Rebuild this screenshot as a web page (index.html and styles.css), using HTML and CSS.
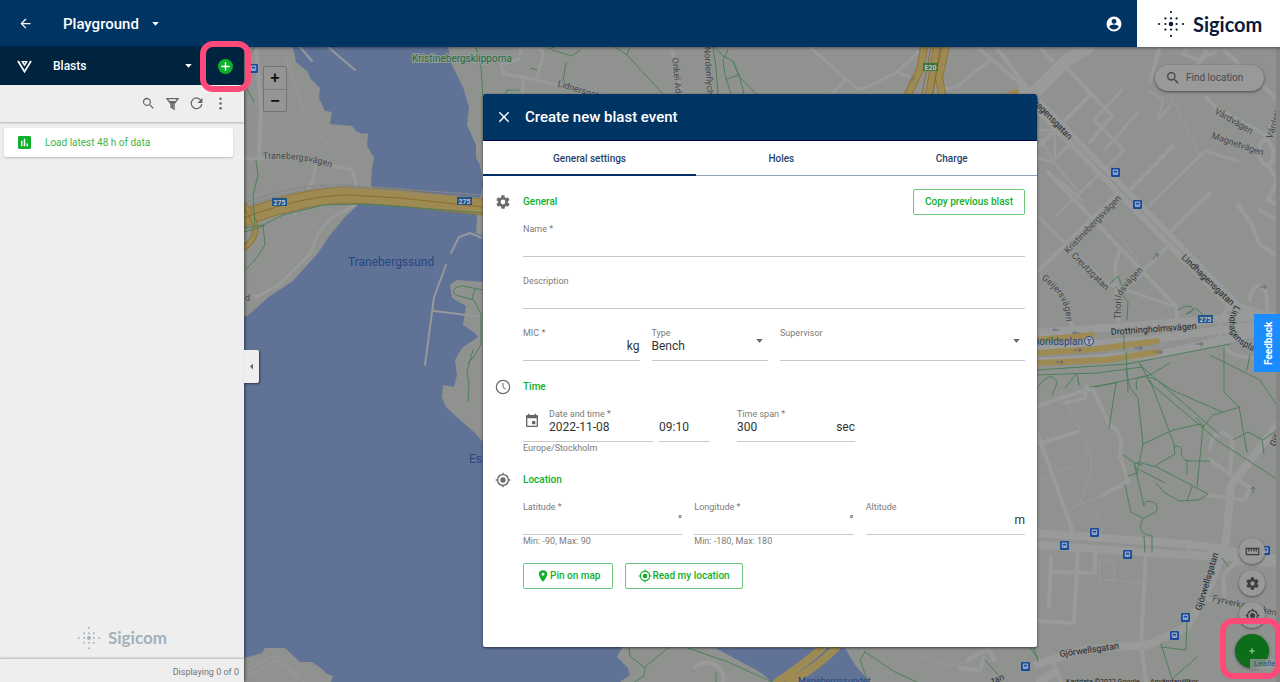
FILE: index.html
```html
<!DOCTYPE html>
<html lang="en">
<head>
<meta charset="utf-8">
<title>Playground – Blasts</title>
<link rel="stylesheet" href="styles.css">
</head>
<body>
<svg class="sprite" aria-hidden="true">
  <symbol id="i-gear" viewBox="0 0 24 24"><path d="M19.4 13c0-.3.1-.6.1-1s0-.7-.1-1l2.100-1.600c.2-.2.200-.4.100-.6l-2-3.500c-.1-.2-.4-.3-.6-.2l-2.500 1c-.5-.4-1.100-.7-1.700-1l-.4-2.600A.5.500 0 0 0 14 2h-4c-.2 0-.5.200-.5.400l-.4 2.700c-.6.200-1.100.600-1.700 1l-2.500-1c-.2-.1-.5 0-.6.200l-2 3.500c-.1.200-.1.500.1.600L4.500 11a8 8 0 0 0 0 2l-2.100 1.600c-.2.200-.2.400-.1.600l2 3.500c.1.200.4.300.6.200l2.500-1c.5.400 1.100.700 1.700 1l.4 2.600c0 .3.300.500.500.500h4c.2 0 .5-.2.500-.4l.4-2.700c.6-.2 1.100-.6 1.700-1l2.500 1c.2.100.5 0 .6-.2l2-3.500c.1-.2.1-.5-.1-.6zM12 15.600a3.600 3.600 0 1 1 0-7.200 3.600 3.600 0 0 1 0 7.200z"/></symbol>
  <symbol id="i-search" viewBox="0 0 24 24"><path d="M15.500 14h-.8l-.3-.3A6.500 6.500 0 1 0 13.700 14.400l.3.300v.8l5 5 1.500-1.500zm-6 0a4.500 4.500 0 1 1 0-9 4.500 4.500 0 0 1 0 9z"/></symbol>
  <symbol id="i-target" viewBox="0 0 24 24"><path d="M12 8a4 4 0 1 0 0 8 4 4 0 0 0 0-8zm8.900 3A9 9 0 0 0 13 3.100V1h-2v2.100A9 9 0 0 0 3.100 11H1v2h2.100A9 9 0 0 0 11 20.900V23h2v-2.100a9 9 0 0 0 7.900-7.900H23v-2zM12 19a7 7 0 1 1 0-14 7 7 0 0 1 0 14z"/></symbol>
  <symbol id="i-down" viewBox="0 0 10 6"><path d="M0 0h10L5 5.500z"/></symbol>
  <symbol id="i-dots" viewBox="0 0 30 30">
    <circle cx="15" cy="15" r="2.400"/><circle cx="15" cy="9" r="1.200"/><circle cx="15" cy="21" r="1.200"/><circle cx="9" cy="15" r="1.200"/><circle cx="21" cy="15" r="1.200"/>
    <circle cx="9" cy="9" r="1.200"/><circle cx="21" cy="9" r="1.200"/><circle cx="9" cy="21" r="1.200"/><circle cx="21" cy="21" r="1.200"/>
    <circle cx="15" cy="2.200" r="1.200"/><circle cx="15" cy="27.800" r="1.200"/><circle cx="2.200" cy="15" r="1.200"/><circle cx="27.800" cy="15" r="1.200"/>
  </symbol>
  <symbol id="m-bus" viewBox="0 0 10 10"><rect width="10" height="10" rx="1.500" fill="#174a9c"/><rect x="2" y="1.800" width="6" height="6" rx="1" fill="#a9b4cc"/><rect x="3" y="3" width="4" height="2" fill="#174a9c"/><path d="M3 6.500h1M6 6.500h1" stroke="#174a9c"/></symbol>
</svg>

<header class="topbar">
  <button class="icon-btn back" aria-label="Back"><svg viewBox="0 0 24 24"><path d="M20 11H7.800l5.600-5.600L12 4l-8 8 8 8 1.400-1.400L7.800 13H20z"/></svg></button>
  <button class="project">Playground <svg class="caret"><use href="#i-down"/></svg></button>
  <button class="icon-btn account" aria-label="Account"><svg viewBox="0 0 24 24"><path d="M12 2a10 10 0 1 0 0 20 10 10 0 0 0 0-20zm0 3.200a3.300 3.300 0 1 1 0 6.600 3.300 3.300 0 0 1 0-6.600zm0 14c-2.800 0-5.200-1.400-6.500-3.500.8-2 4.400-2.900 6.500-2.900s5.700.9 6.500 2.900A7.500 7.500 0 0 1 12 19.200z"/></svg></button>
  <div class="brand"><svg><use href="#i-dots"/></svg><span>Sigicom</span></div>
</header>

<main class="workspace">
  <aside class="sidebar">
    <div class="module">
      <svg class="module-icon" viewBox="0 0 16 14" aria-hidden="true"><path d="M1 1l7 11.500L15 1" fill="none" stroke="#fff" stroke-width="1.900"/><path d="M4.300 1h7.400L8 7z" fill="#fff"/><path d="M7 2.300h2L8 4z" fill="#00243f"/></svg>
      <div class="module-select">
        <select aria-label="Module"><option>Blasts</option></select>
        <svg class="caret"><use href="#i-down"/></svg>
      </div>
      <button class="add" aria-label="Add blast"><svg viewBox="0 0 16 16"><circle cx="8" cy="8" r="8" fill="#0cb02b"/><path d="M8 3.500v9M3.500 8h9" stroke="#fff" stroke-width="1.500"/></svg><span class="highlight highlight-add"></span></button>
    </div>
    <div class="toolbar">
      <button class="icon-btn" aria-label="Search"><svg viewBox="0 0 24 24"><use href="#i-search"/></svg></button>
      <button class="icon-btn" aria-label="Filter"><svg viewBox="0 0 24 24"><path d="M3 4h18l-6.500 8.500V21l-5-3v-5.500z" fill="none" stroke="currentColor" stroke-width="2"/><path d="M6.500 8h11l-4 4.500V20l-3-2v-5.500z"/></svg></button>
      <button class="icon-btn" aria-label="Refresh"><svg viewBox="0 0 24 24"><path d="M19.500 7.500A8.500 8.500 0 1 0 20.500 13" fill="none" stroke="currentColor" stroke-width="2"/><path d="M21.500 3v8h-8z"/></svg></button>
      <button class="icon-btn" aria-label="More"><svg viewBox="0 0 24 24"><circle cx="12" cy="4.500" r="2"/><circle cx="12" cy="12" r="2"/><circle cx="12" cy="19.500" r="2"/></svg></button>
    </div>
    <button class="load-card"><svg viewBox="0 0 14 14"><rect width="14" height="14" rx="1.500" fill="#0cb02b"/><path d="M4 5v6M7 3v8M10 8v3" stroke="#fff" stroke-width="1.600"/></svg>Load latest 48 h of data</button>
    <div class="watermark"><svg><use href="#i-dots"/></svg><span>Sigicom</span></div>
    <footer class="count">Displaying 0 of 0</footer>
    <button class="collapse" aria-label="Collapse panel"><svg viewBox="0 0 4 8"><path d="M4 0v8L0 4z"/></svg></button>
  </aside>

  <section class="map" aria-label="Map">
    <svg class="map-canvas" viewBox="244 47 1036 635" preserveAspectRatio="xMidYMid slice">
      <rect x="244" y="47" width="1036" height="635" fill="#909290"/>
      <g class="water">
        <path d="M293 47l3 15 12 10 2 6 10 10-1 10 6 13 7 1-1 6-1 6 10 1 12 1 4 5 6 3 6-1-1 13 7 12-2 10-1 17-3 5-10 15-13 12-15 18-12 18-25 28-23 15-17 15-6 5h-3v342l18-5 3-5h20l15 14h12l10 7 5 5 6 2-2 6h289l10-7-2-7-11-11 5-9-20-100-119-106-8-9-15-13-14-13-4-10 1-12 11 2 3-12-2-15 7-12 16-11-3-4-12-8 3-19-14-8-2-13 7-5 26 2 7-44-14-5 2-28 5-20-3-20-4-7v-13l-9-20 2-18-6-20-11-22-4-18z"/>
        <path d="M715 648l45 24 12 10h98l-15-17-10-17z"/>
      </g>
      <g class="pier"><path d="M300 47l12 14M328 47l27 23M451 253l8-16 11-4 12 5M446 265l-12 32-9 68M434 311l49 6"/></g>
      <g class="minor">
        <path d="M244 159l50-2 58 13 6 20M316 165l-3 15-10 20-8 14M371 187h-10l-6 18-25 14-12 15-8 20-30 30-23 13-3-2M522 47l-3 12-18 6 3 9 20 3 76 18M520 49l18-1q6 2 5 8l-6 22M524 77l-2 17M671 47l11 47M810 47l36 32-14 15M846 79l11 10 8-1 32-16 21-20M897 72l12 5M943 86l5 3 10-3 33-27M1037 158l15 4 20-20M1056 216l68-66-30-30 28-30M1037 215l69 68 70 24M1058 180l24 20M1105 150l33-38M1150 205l55-54 33 10"/>
        <path d="M1040 130h15v30M1042 140l10 20 25 30M1148 90l15 10-5 20 13-15" stroke-width="2"/>
      </g>
      <g class="street">
        <path d="M256 47l5 60-2 52M977 47l50 42M996 47l31 40M1040 47l12 14M1066 67l46 49-22 26M1037 272l82-79M1130 190l43-44M1030 155l30-30 30-30M1048 172l55 58 73 76 1 15M1042 277l24 24 6 24M1120 250l-5 15 4 55M1128 286l45-45M1172 230l38-37M1187 47l-3 7 14 6 17-8M1190 78l16-27M1160 47l-10 35M1225 51l54 50M1206 97l9 10 50 28 13-20M1265 140c-8 0-8 25 2 25s7-25-2-25M1267 165l11 15-10 20 12 6M1238 205l14 20 8 20 20 12M1260 210l20 12M1250 300c0-20 20-20 17 10M1235 303c-20 10-20 45 0 52l45 8"/>
        <path d="M1037 406l55-18 18 38c12 4 12 20 10 30l8 25-27 15M1037 432l36 100M1065 403l20-5 1-12M1037 444l40-12M1210 450c2-20 15-20 23-10l-3 32M1210 460l40 28-5 12-38-5M1051 557l-2 50M1053 572l42 1v-20M1078 550l-4 73-37-2M1146 553l-5 92M1225 600l-2-25 12-12 41 2M1209 599l40 8M1142 650l4 32M1053 662l8 20M1186 541c8 3 2 12 0 12"/>
        <path d="M695 667c12-10 32 0 28 15M968 660l14-8 6-4 6 12M960 668l20 2 4-12"/>
      </g>
      <g class="thin"><path d="M281 47l22 65 48 65M1065 400l25 50-10 12-42 20M1085 450c10 0 8 30-5 50l20 15-15 10M1105 495l-40 15M1105 580l40 3M1100 560h14v20h-14zM918 655l32 10 15-2M925 660l15-12M244 672l30-16 25 20M244 678l32-18 28 22M1090 200l48 60M1037 240l40 45M1165 65l5 30 30 60 12 8"/></g>
      <g class="avenue">
        <path d="M1088 47l-24 16-40 40M1023 90l214 219 43 14" stroke-width="13"/>
        <path d="M1037 333l240-18M1037 360l120-5 120-27M1037 348l110-8 133-18M1037 533l160 12 82 14M1037 545l150 10 93 5" stroke-width="8"/>
        <path d="M1037 664l50-15 60-4 40-18 25-45 14-40 5-57 49-63M1040 682l15-10" stroke-width="8"/>
      </g>
      <path class="avenue-line" d="M1033 100l200 205"/>
      <g class="highway">
        <path class="edge" d="M244 218q60-23 106-23l50 3 83 9" stroke-width="17"/><path d="M244 218q60-23 106-23l50 3 83 9" stroke-width="15"/>
        <path class="edge" d="M244 205q8 8 11 20t-11 23" stroke-width="6"/><path d="M244 205q8 8 11 20t-11 23" stroke-width="4"/>
        <path class="edge" d="M924 47l-3 20-14 30M937 47l-4 25-4 22M946 47l-7 30 3 17" stroke-width="8"/><path d="M924 47l-3 20-14 30M937 47l-4 25-4 22M946 47l-7 30 3 17" stroke-width="6"/>
        <path d="M1004 97l12-5"/>
        <path d="M1037 340l55-5M1037 353l60-4 60-8M1037 363l70-3 50-8" stroke-width="6"/>
        <path d="M822 648q-20 18-45 34M836 648q-20 20-46 34" stroke-width="8"/>
      </g>
      <path class="highway-line" d="M244 218q60-23 106-23l50 3 83 9M931 47l-9 47M940 47l-7 47"/>
      <path class="rail" d="M244 203q50-20 100-18l139 10M244 207q60-22 106-20l133 11M1037 357l70-4"/>
      <g class="path">
        <path d="M255 47l-5 7M246 87l8 15M256 160l2 15-5 20 2 30M244 228l19-3 20-10 40-10 45-1 115 9M263 225l2 20-10 15-10 10M244 232l20-6M476 47l5 20 2 30M483 290l-20-4c-10 0-13 8-4 10l15 4 7 14v30l-8 14-5 5M475 289l-3 10M473 350l-6 22 2 12-1 17M615 47l12 8 36 39M627 54l3-7M549 49l5-2M552 50l20 6 8-6M566 63l-3 18M531 68l6 2M505 94l2-4h12M713 47l3 20 2 27M715 47l8 9 10 5 6 15 17 18M728 50l-5 10 2 15 6 19M733 61l6 14 5 19M726 79l13-4"/>
        <path d="M629 648l1 8 15 12-1 8-10 6M645 667l24-20M688 648l40 14 44 20M716 673v9M865 652l-5 8 8 22M865 652l30 20 22 10M985 660l15 17M1034 648l4 14"/>
        <path d="M1037 370l90-6 103-20M1124 330v20M1126 352l2 40M1110 284l8-8 4 10M1116 287l12 15-1 18M1178 310c15-10 20 2 8 4l10-6 10 10M1140 363l10 20 68 58 62 40M1140 365l80 70M1224 347v45l15 15 8 45M1210 355l50 25 20 30M1250 355l-3 15M1037 375l60-2 45-6M1065 388l12-15 2 12M1095 387l55-12 20-12M1037 388q15-20 20-5l-5 12M1137 390q-5-20 20-10l15 10 50 22"/>
        <path d="M1090 387l26-4-7 45M1126 370l4 18 8 10 5 46-6 30M1150 380l24 64 1 10-20 12M1143 444l30-14 27-6 3 3-6 60M1137 462l20 5 51 27-9 6-20 1-14-8-9-10M1123 455l12 8 7 2M1174 446c15 0 0 10 14 15h22M1187 460v14M1135 465l3 8-10 3M1140 470l25 13M1125 485l6 27 12 6M1134 463l10 43c-2-8 18-6 12 6l-12 6c-8 12-2 16 8 18v16M1144 536l1 16M1192 487l-5 14M1203 427l10-12 27-8M1196 418l8 8M1233 440l15-8 15 8 17-12M1262 440l2 14M1161 644l11 35 25-22M1161 647l25 3 1-30M1222 558l6 8M1030 648l8 10"/>
      </g>
      <g class="text street-label">
        <path id="t1" d="M263 159q38-2 70 9" fill="none"/><text><textPath href="#t1">Tranebergsvägen</textPath></text>
        <text x="245" y="301">d</text>
        <text transform="translate(557 86) rotate(17)">Lidnersgatan</text>
        <text transform="translate(672 58) rotate(84)">Onkel Adams</text>
        <text transform="translate(704 47) rotate(86)">Nordenflychtsvägen</text>
        <text class="strong" transform="translate(1029 99) rotate(46)">dhagensgatan</text>
        <text class="strong" transform="translate(1181 258) rotate(44)">Lindhagensgatan</text>
        <path id="t2" d="M1235 305q-18 32 20 47l20 4" fill="none"/><text class="strong"><textPath href="#t2">Lindhagensplan</textPath></text>
        <text transform="translate(1214 113) rotate(30)">Vårdvägen</text>
        <text transform="translate(1211 138) rotate(19)">Magnetvägen</text>
        <text transform="translate(1272 139) rotate(-72)">Vårdstig</text>
        <text transform="translate(1068 254) rotate(-46)">Kristinebergsvägen</text>
        <text transform="translate(1071 256) rotate(45)">Creutzgatan</text>
        <path id="t3" d="M1041 279q24 16 25 38v20" fill="none"/><text><textPath href="#t3">Geijersvägen</textPath></text>
        <path id="t4" d="M1121 319v-20q2-10 24-30" fill="none"/><text><textPath href="#t4">Thorildsvägen</textPath></text>
        <text class="strong" transform="translate(1111 335) rotate(-4)">Drottningholmsvägen</text>
        <text class="strong" transform="translate(1060 657) rotate(-8)">Gjörwellsgatan</text>
        <text class="strong" transform="translate(1201 611) rotate(-73)">Gjörwellsgatan</text>
        <text class="strong" transform="translate(1275 447) rotate(-65)">Gjörwells</text>
        <text transform="translate(1212 601) rotate(13)">Fyrverkarbacken</text>
        <text class="strong" transform="translate(993 684) rotate(-22)">tan</text>
      </g>
      <g class="text water-label"><text x="348" y="266">Tranebergssund</text><text x="469" y="463">Essingen</text><text class="small" x="798" y="684">Mariebergssundet</text><text class="station" x="1083" y="345" text-anchor="end">Thorildsplan</text></g>
      <text class="text park-label" x="412" y="62">Kristinebergsklipporna</text>
      <circle cx="1089" cy="341" r="4.500" fill="#a5aab3" stroke="#294b87"/><text class="text badge" x="1089" y="344" fill="#294b87" text-anchor="middle">T</text>
      <g fill="#21548d"><rect x="272" y="198" width="15" height="8"/><rect x="457" y="197" width="15" height="8"/><rect x="1198" y="315" width="15" height="8"/></g>
      <rect x="923" y="63" width="15" height="8" fill="#39753a"/>
      <g class="text badge" fill="#c0c5ca" text-anchor="middle"><text x="279.500" y="205">275</text><text x="464.500" y="204">275</text><text x="1205.500" y="322">275</text><text x="930.500" y="70">E20</text></g>
      <g>
        <use href="#m-bus" x="249" y="64" width="9" height="9"/><use href="#m-bus" x="1111" y="168" width="9" height="9"/><use href="#m-bus" x="1133" y="200" width="9" height="9"/>
        <use href="#m-bus" x="1090" y="528" width="9" height="9"/><use href="#m-bus" x="1060" y="541" width="9" height="9"/><use href="#m-bus" x="1123" y="550" width="9" height="9"/>
        <use href="#m-bus" x="1181" y="613" width="9" height="9"/><use href="#m-bus" x="1170" y="631" width="9" height="9"/><use href="#m-bus" x="1021" y="662" width="9" height="9"/><use href="#m-bus" x="1261" y="546" width="9" height="9"/>
      </g>
      <path class="arrow" d="M1053 330h6m-6 0l2-1.500M1073 333h6m-6 0l2-1.500M1074 350h7m-2-2l2 2-2 2M1135 348h7m-2-2l2 2-2 2M1155 352h7m-2-2l2 2-2 2M1196 344h7m-2-2l2 2-2 2M1056 362h7m-2-2l2 2-2 2M1153 259l5-5m-3 0h3v3M1260 287h6m-2-2l2 2-2 2M1253 493v-6m-2 2l2-2 2 2M915 76l-3 5"/>
      <g class="text credits"><text x="1066" y="684">Kartdata ©2022 Google</text><text x="1150" y="684">Användarvillkor</text></g>
      <rect x="1276" y="47" width="4" height="635" fill="#858685"/>
    </svg>

    <div class="zoom-control"><button aria-label="Zoom in">+</button><button aria-label="Zoom out">−</button></div>
    <label class="find"><svg viewBox="0 0 24 24"><use href="#i-search"/></svg><input type="search" placeholder="Find location" aria-label="Find location"></label>
    <div class="map-tools">
      <button aria-label="Measure"><svg viewBox="0 0 24 24"><path d="M2 7h20v10H2zM6 7v5M10 7v5M14 7v5M18 7v5" fill="none" stroke="currentColor" stroke-width="2"/></svg></button>
      <button aria-label="Map settings"><svg><use href="#i-gear"/></svg></button>
      <button aria-label="My position"><svg><use href="#i-target"/></svg></button>
      <button class="fab" aria-label="Add"><svg viewBox="0 0 24 24"><path d="M12 4v16M4 12h16" stroke="#b7d3ba" stroke-width="3"/></svg></button>
      <a class="leaflet" href="#">Leaflet</a>
      <span class="highlight highlight-fab"></span>
    </div>
    <button class="feedback">Feedback</button>

    <div class="dialog-layer">
      <form class="dialog" role="dialog" aria-labelledby="dialog-title">
        <header class="dialog-head">
          <button type="button" class="icon-btn" aria-label="Close"><svg viewBox="0 0 24 24"><path d="M4 4l16 16M20 4L4 20" stroke="currentColor" stroke-width="2.400"/></svg></button>
          <h1 id="dialog-title">Create new blast event</h1>
        </header>
        <nav class="tabs" role="tablist">
          <button type="button" role="tab" aria-selected="true" class="tab active">General settings</button>
          <button type="button" role="tab" class="tab">Holes</button>
          <button type="button" role="tab" class="tab">Charge</button>
        </nav>
        <div class="dialog-body">
          <section class="group">
            <svg class="group-icon"><use href="#i-gear"/></svg>
            <div class="group-head"><h2>General</h2><button type="button" class="outline">Copy previous blast</button></div>
            <div class="fields general-fields">
              <div class="field full"><label for="name">Name *</label><div class="control"><input id="name"></div></div>
              <div class="field full"><label for="desc">Description</label><div class="control"><input id="desc"></div></div>
              <div class="field"><label for="mic">MIC *</label><div class="control"><input id="mic"><span>kg</span></div></div>
              <div class="field"><label for="type">Type</label><div class="control"><select id="type"><option>Bench</option></select><svg class="caret"><use href="#i-down"/></svg></div></div>
              <div class="field half"><label for="sup">Supervisor</label><div class="control"><select id="sup"><option></option></select><svg class="caret"><use href="#i-down"/></svg></div></div>
            </div>
          </section>
          <section class="group">
            <svg class="group-icon" viewBox="0 0 24 24"><circle cx="12" cy="12" r="10" fill="none" stroke="currentColor" stroke-width="1.800"/><path d="M12 6v6.500l4.500 3" fill="none" stroke="currentColor" stroke-width="1.500"/></svg>
            <div class="group-head"><h2>Time</h2></div>
            <div class="fields time-fields">
              <div class="field date">
                <svg viewBox="0 0 24 24"><path d="M17 12h-5v5h5zM16 1v2H8V1H6v2H5a2 2 0 0 0-2 2v14c0 1.100.9 2 2 2h14a2 2 0 0 0 2-2V5a2 2 0 0 0-2-2h-1V1zm3 18H5V8h14z"/></svg>
                <label for="date">Date and time *</label><div class="control"><input id="date" value="2022-11-08"></div>
              </div>
              <div class="field"><div class="control"><input aria-label="Time of day" value="09:10"></div></div>
              <div class="field span"><label for="span">Time span *</label><div class="control"><input id="span" value="300"><span>sec</span></div></div>
            </div>
            <p class="hint">Europe/Stockholm</p>
          </section>
          <section class="group">
            <svg class="group-icon"><use href="#i-target"/></svg>
            <div class="group-head"><h2>Location</h2></div>
            <div class="fields location-fields">
              <div class="field"><label for="lat">Latitude *</label><div class="control"><input id="lat"><span class="degree">°</span></div><p class="hint">Min: -90, Max: 90</p></div>
              <div class="field"><label for="lng">Longitude *</label><div class="control"><input id="lng"><span class="degree">°</span></div><p class="hint">Min: -180, Max: 180</p></div>
              <div class="field"><label for="alt">Altitude</label><div class="control"><input id="alt"><span>m</span></div></div>
            </div>
            <div class="actions">
              <button type="button" class="outline"><svg viewBox="0 0 24 24"><path d="M12 2a7 7 0 0 0-7 7c0 5.300 7 13 7 13s7-7.700 7-13a7 7 0 0 0-7-7zm0 9.500a2.500 2.500 0 1 1 0-5 2.500 2.500 0 0 1 0 5z"/></svg>Pin on map</button>
              <button type="button" class="outline"><svg><use href="#i-target"/></svg>Read my location</button>
            </div>
          </section>
        </div>
      </form>
    </div>
  </section>
</main>
</body>
</html>
```
FILE: styles.css
```css
* { box-sizing: border-box; }
body {
  margin: 0;
  height: 100vh;
  display: flex;
  flex-direction: column;
  overflow: hidden;
  font: 10px/12px Roboto, "Liberation Sans", sans-serif;
  color: #333;
}
button, input, select {
  font: inherit;
  color: inherit;
  background: none;
  border: 0;
  padding: 0;
  margin: 0;
  border-radius: 0;
  outline: 0;
}
button { cursor: pointer; }
select { appearance: none; }
h1, h2, p { margin: 0; }
svg { fill: currentColor; flex: none; }
.sprite { position: absolute; width: 0; height: 0; }
.caret { width: 7px; height: 4px; }
.icon-btn { display: flex; }
.icon-btn svg { width: 15px; height: 15px; }

/* Top bar */
.topbar {
  flex: none;
  height: 47px;
  display: flex;
  align-items: center;
  padding-left: 18px;
  background: #003463;
  color: #fff;
  position: relative;
  z-index: 2;
  box-shadow: 0 1px 3px rgba(0, 0, 0, .45);
}
.project {
  display: flex;
  align-items: center;
  gap: 13px;
  margin-left: 30px;
  font-size: 15px;
  line-height: 20px;
  font-weight: 500;
}
.account { margin-left: auto; }
.account svg { width: 18px; height: 18px; }
.brand {
  align-self: stretch;
  display: flex;
  align-items: center;
  gap: 8px;
  width: 143px;
  margin-left: 14px;
  padding-left: 20px;
  background: #fff;
  color: #0a1a3a;
  font: 700 20px/24px Lato, sans-serif;
}
.brand svg { width: 28px; height: 28px; }

/* Sidebar */
.workspace { flex: 1; display: flex; min-height: 0; }
.sidebar {
  position: relative;
  flex: none;
  width: 244px;
  display: flex;
  flex-direction: column;
  background: #eee;
  box-shadow: 1px 0 3px rgba(0, 0, 0, .5);
  z-index: 3;
}
.module {
  height: 38px;
  display: flex;
  align-items: center;
  padding: 0 11px 0 17px;
  background: #00243f;
  color: #fff;
}
.module-icon { width: 15px; height: 13px; }
.module-select {
  flex: 1;
  display: flex;
  align-items: center;
  margin: 0 26px 0 21px;
}
.module-select select { flex: 1; font-size: 12px; line-height: 16px; font-weight: 500; }
.add { position: relative; display: flex; }
.add svg { width: 15px; height: 15px; }
.highlight {
  position: absolute;
  border: 6px solid #fe4a78;
  border-radius: 13px;
  pointer-events: none;
}
.highlight-add { inset: -18px; }
.toolbar {
  height: 37px;
  display: flex;
  align-items: center;
  justify-content: flex-end;
  gap: 9px;
  padding-right: 16px;
  color: #666;
  box-shadow: 0 1px 2px rgba(0, 0, 0, .25);
}
.toolbar svg { width: 15px; height: 15px; }
.load-card {
  display: flex;
  align-items: center;
  gap: 14px;
  height: 29px;
  margin: 6px 11px 0 4px;
  padding-left: 14px;
  border-radius: 2px;
  background: #fff;
  box-shadow: 0 1px 2px rgba(0, 0, 0, .2);
  color: #3db54a;
}
.load-card svg { width: 13px; height: 13px; }
.watermark {
  display: flex;
  align-items: center;
  justify-content: center;
  gap: 7px;
  margin-top: auto;
  padding-bottom: 9px;
  color: #a3b1b9;
  font: 700 17px/24px Lato, sans-serif;
}
.watermark svg { width: 24px; height: 24px; }
.count {
  padding: 7px 5px 4px;
  text-align: right;
  font-size: 9px;
  color: #757575;
  box-shadow: 0 -1px 2px rgba(0, 0, 0, .25);
}
.collapse {
  position: absolute;
  left: 100%;
  top: 303px;
  width: 15px;
  height: 33px;
  display: grid;
  place-items: center;
  background: #eee;
  color: #666;
  border-radius: 0 2px 2px 0;
  box-shadow: 1px 1px 2px rgba(0, 0, 0, .5);
}
.collapse svg { width: 3px; height: 7px; }

/* Map */
.map { position: relative; flex: 1; min-width: 0; background: #909290; }
.map-canvas { position: absolute; width: 100%; height: 100%; }
.map-canvas path { stroke-linejoin: round; stroke-linecap: round; }
.water { fill: #607397; }
.pier, .minor, .street, .avenue, .thin, .highway, .path { fill: none; }
.pier { stroke: #96989a; stroke-width: 2; }
.minor { stroke: #999a9a; stroke-width: 3; }
.street { stroke: #999a9a; stroke-width: 4; }
.avenue { stroke: #999a9a; }
.thin { stroke: #999a9a; stroke-width: 1; }
.avenue-line, .rail { fill: none; stroke: #868887; stroke-width: 1; }
.highway { stroke: #9e8a53; stroke-width: 6; }
.highway .edge { stroke: #927438; }
.highway-line { fill: none; stroke: #8d6d2c; stroke-width: 1; }
.path { stroke: #4c8059; stroke-width: 1; }
.arrow { fill: none; stroke: #626878; stroke-width: 1; }
.text { font-family: Roboto, sans-serif; font-size: 9px; }
.street-label { fill: #454749; stroke: #949695; stroke-width: 2px; paint-order: stroke; }
.street-label path { stroke: none; }
.strong { fill: #242628; }
.water-label { font-size: 12px; fill: #26477f; }
.water-label .small { font-size: 9px; }
.water-label .station { font-size: 10px; }
.park-label { font-size: 10px; fill: #2d6640; stroke: #929f97; stroke-width: 2px; paint-order: stroke; }
.badge { font-size: 7px; font-weight: 700; }
.credits { font-size: 7px; fill: #222; }

.zoom-control {
  position: absolute;
  left: 19px;
  top: 19px;
  width: 24px;
  border: 1px solid #747474;
  border-radius: 2px;
  background: #949594;
  color: #111;
}
.zoom-control button {
  display: block;
  width: 100%;
  height: 22px;
  font: 700 16px/20px "Liberation Sans", sans-serif;
}
.zoom-control button + button { border-top: 1px solid #7c7c7c; }
.find {
  position: absolute;
  right: 16px;
  top: 18px;
  width: 109px;
  height: 26px;
  display: flex;
  align-items: center;
  gap: 5px;
  padding: 0 10px;
  border-radius: 13px;
  background: #989998;
  color: #444;
  box-shadow: 0 1px 3px rgba(0, 0, 0, .5);
}
.find svg { width: 16px; height: 16px; }
.find input { min-width: 0; flex: 1; }
.find input::placeholder { color: #4a4a4a; opacity: 1; }
.map-tools {
  position: absolute;
  right: 11px;
  bottom: 14px;
  display: flex;
  flex-direction: column;
  align-items: center;
  gap: 6px;
}
.map-tools button {
  width: 26px;
  height: 26px;
  display: grid;
  place-items: center;
  border-radius: 50%;
  background: #989998;
  color: #3c3c3c;
  box-shadow: 0 1px 3px rgba(0, 0, 0, .45);
}
.map-tools svg { width: 15px; height: 15px; }
.map-tools .fab { width: 34px; height: 34px; background: #0d6e1a; }
.map-tools .fab svg { width: 8px; height: 8px; }
.leaflet {
  position: absolute;
  left: 15px;
  bottom: -1px;
  width: 26px;
  padding-left: 4px;
  overflow: hidden;
  font-size: 8px;
  line-height: 10px;
  background: rgba(150, 155, 155, .75);
  color: #26557c;
  text-decoration: none;
}
.highlight-fab { right: -12px; bottom: -11px; width: 61px; height: 61px; }
.feedback {
  position: absolute;
  right: 0;
  top: 267px;
  width: 26px;
  height: 58px;
  padding-right: 4px;
  writing-mode: vertical-rl;
  transform: rotate(180deg);
  background: #1a8cff;
  color: #fff;
  font-weight: 700;
}

/* Dialog */
.dialog-layer {
  position: relative;
  display: flex;
  justify-content: center;
  padding: 47px 4px 0 0;
  pointer-events: none;
}
.dialog {
  pointer-events: auto;
  width: 554px;
  border-radius: 2px;
  overflow: hidden;
  background: #fff;
  box-shadow: 0 1px 3px rgba(0, 0, 0, .6);
}
.dialog-head {
  display: flex;
  align-items: center;
  gap: 14px;
  height: 47px;
  padding-left: 14px;
  background: #003463;
  border-bottom: 1px solid #00044f;
  color: #fff;
}
.dialog-head h1 { font-size: 15px; line-height: 20px; font-weight: 500; }
.dialog-head svg { width: 14px; height: 14px; }
.tabs { display: grid; grid-template-columns: 5fr 4fr 4fr; }
.tab {
  height: 35px;
  padding-top: 2px;
  border-bottom: 1px solid #8fa0b3;
  font-weight: 500;
  color: #1f446f;
}
.tab.active { border-bottom: 2px solid #002f66; }
.dialog-body {
  display: flex;
  flex-direction: column;
  gap: 13px;
  padding: 13px 12px 58px;
}
.group {
  display: grid;
  grid-template-columns: 28px minmax(0, 1fr);
}
.group > * { grid-column: 2; }
.group > .group-icon {
  grid-column: 1;
  grid-row: 1;
  align-self: center;
  width: 16px;
  height: 16px;
  margin-bottom: 8px;
  color: #6b6b6b;
}
.group-head {
  grid-row: 1;
  display: flex;
  align-items: center;
  justify-content: space-between;
  height: 26px;
  margin-bottom: 8px;
}
.group-head h2 { font-size: 10px; line-height: 12px; font-weight: 500; color: #0fb02c; }
.outline {
  display: flex;
  align-items: center;
  height: 26px;
  padding: 0 11px;
  border: 1px solid #6cc777;
  border-radius: 2px;
  font-weight: 500;
  color: #0fb02c;
}
.outline svg { width: 14px; height: 14px; }
.fields { display: grid; gap: 18px 12px; }
.general-fields { grid-template-columns: repeat(4, minmax(0, 1fr)); }
.full { grid-column: 1 / -1; }
.half { grid-column: span 2; }
.time-fields { grid-template-columns: 130px 51px 139px; column-gap: 6px; align-items: end; }
.span { padding-left: 21px; }
.location-fields { grid-template-columns: repeat(3, minmax(0, 1fr)); }
.field label, .hint { display: block; font-size: 9px; line-height: 12px; color: #7b7b7b; }
.control {
  display: flex;
  align-items: center;
  height: 22px;
  padding-bottom: 6px;
  border-bottom: 1px solid #c9c9c9;
  font-size: 12px;
  line-height: 15px;
}
.control input, .control select { flex: 1; min-width: 0; }
.control .caret { color: #666; margin: -12px 5px 0 0; }
.degree { color: #666; }
.date { position: relative; }
.date label, .date input { padding-left: 26px; }
.date svg { position: absolute; left: 1px; top: 5px; width: 16px; height: 16px; color: #666; }
.field .hint, .hint { margin-top: 1px; line-height: 11px; }
.actions { display: flex; gap: 12px; margin-top: 16px; }
.actions .outline { padding: 0 12px; }
```
